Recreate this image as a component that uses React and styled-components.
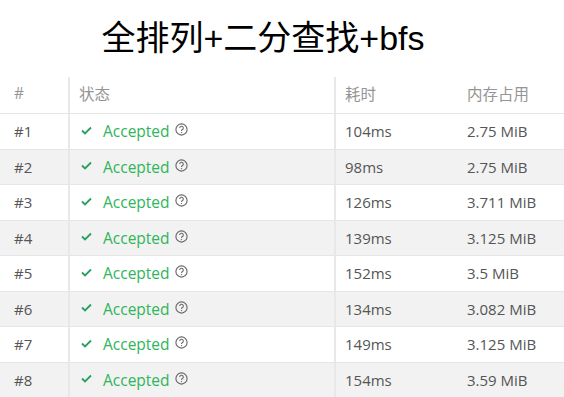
import React from "react";
import styled, { createGlobalStyle } from "styled-components";

const Global = createGlobalStyle`
  html, body { margin: 0; padding: 0; background: #fff; }
  body { font-family: "Open Sans", "Noto Sans CJK SC", sans-serif; }
`;

const Page = styled.div`
  width: 564px;
  height: 397px;
  overflow: hidden;
  background: #fff;
`;

const Title = styled.h1`
  margin: 0;
  height: 77px;
  padding: 2px 38px 0 0;
  box-sizing: border-box;
  text-align: center;
  font-family: "Liberation Sans", "Noto Sans CJK SC", sans-serif;
  font-weight: 400;
  font-size: 34px;
  line-height: 72px;
  color: #000;
`;

const Table = styled.div`
  display: grid;
  grid-template-columns: 70px 266px 120px 1fr;
`;

const HeadCell = styled.div`
  height: 37px;
  box-sizing: border-box;
  border-bottom: 1px solid #e6e6e6;
  display: flex;
  align-items: center;
  padding-left: ${(p) => p.$pad}px;
  padding-bottom: 4px;
  font-size: 15.5px;
  color: #959595;
  position: relative;
  ${(p) =>
    p.$line &&
    `&::after{content:"";position:absolute;right:0;top:0;bottom:0;width:2px;background:#e8e8e8;}`}
`;

const Cell = styled.div`
  height: 35.5px;
  box-sizing: border-box;
  border-bottom: 1px solid #e6e6e6;
  border-right: ${(p) => (p.$line ? "2px solid #e8e8e8" : "none")};
  background: ${(p) => (p.$alt ? "#f2f2f2" : "#fff")};
  display: flex;
  align-items: center;
  padding-left: ${(p) => p.$pad}px;
  font-size: 15px;
  color: #555;
`;

const Status = styled.span`
  display: inline-flex;
  align-items: center;
  color: #2fb55a;
  font-size: 15.5px;
`;

const Check = styled.svg`
  width: 11px;
  height: 9px;
  margin-right: 11px;
  margin-top: -2px;
`;

const Help = styled.svg`
  width: 13px;
  height: 13px;
  margin-left: 5px;
  margin-top: -3px;
`;

const rows = [
  ["104ms", "2.75 MiB"],
  ["98ms", "2.75 MiB"],
  ["126ms", "3.711 MiB"],
  ["139ms", "3.125 MiB"],
  ["152ms", "3.5 MiB"],
  ["134ms", "3.082 MiB"],
  ["149ms", "3.125 MiB"],
  ["154ms", "3.59 MiB"],
];

export default function App() {
  return (
    <Page>
      <Global />
      <Title>全排列+二分查找+bfs</Title>
      <Table>
        <HeadCell $pad={14} $line>#</HeadCell>
        <HeadCell $pad={9} $line>状态</HeadCell>
        <HeadCell $pad={9}>耗时</HeadCell>
        <HeadCell $pad={11}>内存占用</HeadCell>
        {rows.map(([t, m], i) => {
          const alt = i % 2 === 1;
          return (
            <React.Fragment key={i}>
              <Cell $pad={14} $line $alt={alt}>#{i + 1}</Cell>
              <Cell $pad={11} $line $alt={alt}>
                <Status>
                  <Check viewBox="0 0 11 9">
                    <polyline points="1,4.5 4,7.5 10,1.5" fill="none" stroke="#2a9f5f" strokeWidth="1.8" />
                  </Check>
                  Accepted
                  <Help viewBox="0 0 13 13">
                    <circle cx="6.5" cy="6.5" r="5.6" fill="none" stroke="#666" strokeWidth="1.1" />
                    <path d="M4.7 5 A1.8 1.8 0 1 1 7.1 6.7 Q6.5 7 6.5 7.9" fill="none" stroke="#666" strokeWidth="1.1" />
                    <circle cx="6.5" cy="9.6" r="0.7" fill="#666" />
                  </Help>
                </Status>
              </Cell>
              <Cell $pad={9} $alt={alt}>{t}</Cell>
              <Cell $pad={11} $alt={alt}>{m}</Cell>
            </React.Fragment>
          );
        })}
      </Table>
    </Page>
  );
}
